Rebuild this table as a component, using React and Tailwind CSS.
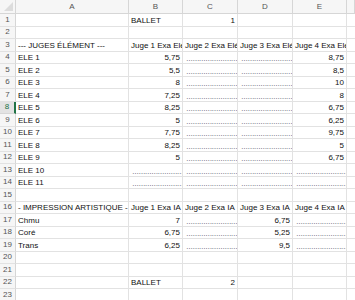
import React from "react";

const D = "……………………";
const rows = [
  ["", "BALLET", "1", "", ""],
  ["", "", "", "", ""],
  ["--- JUGES ÉLÉMENT ---", "Juge 1 Exa Elé", "Juge 2 Exa Elé", "Juge 3 Exa Elé", "Juge 4 Exa Elé"],
  ["ELE 1", "5,75", D, D, "8,75"],
  ["ELE 2", "5,5", D, D, "8,5"],
  ["ELE 3", "8", D, D, "10"],
  ["ELE 4", "7,25", D, D, "8"],
  ["ELE 5", "8,25", D, D, "6,75"],
  ["ELE 6", "5", D, D, "6,25"],
  ["ELE 7", "7,75", D, D, "9,75"],
  ["ELE 8", "8,25", D, D, "5"],
  ["ELE 9", "5", D, D, "6,75"],
  ["ELE 10", D, D, D, D],
  ["ELE 11", D, D, D, D],
  ["", "", "", "", ""],
  ["- IMPRESSION ARTISTIQUE -", "Juge 1 Exa IA", "Juge 2 Exa IA", "Juge 3 Exa IA", "Juge 4 Exa IA"],
  ["Chmu", "7", D, "6,75", D],
  ["Coré", "6,75", D, "5,25", D],
  ["Trans", "6,25", D, "9,5", D],
  ["", "", "", "", ""],
  ["", "", "", "", ""],
  ["", "BALLET", "2", "", ""],
  ["", "", "", "", ""],
];

const isNum = (v) => /^[0-9]+(,[0-9]+)?$/.test(v);

function Cell({ v }) {
  const num = isNum(v);
  const dots = v === D;
  return (
    <div
      className={
        "h-[12.5px] border-r border-b border-[#e2e2e2] overflow-hidden whitespace-nowrap flex items-end px-[2px] leading-[11px] " +
        (num ? "justify-end" : "justify-start")
      }
    >
      {dots ? (
        <span className="text-[7px] tracking-[-0.6px] text-[#1f2840] leading-[9px] pl-[1px]">{v}</span>
      ) : (
        <span>{v}</span>
      )}
    </div>
  );
}

export default function App() {
  return (
    <div
      className="w-[355px] h-[300px] overflow-hidden bg-white text-[8px] text-[#111]"
      style={{ fontFamily: '"Liberation Sans", Arial, sans-serif' }}
    >
      <div className="grid grid-cols-[16px_113px_54px_55px_55px_54px_1fr]">
        <div className="h-[14px] bg-[#f6f6f6] border-r border-b border-[#d6d6d6] relative">
          <svg className="absolute right-[2px] bottom-[2px]" width="9" height="9" viewBox="0 0 9 9">
            <polygon points="9,0 9,9 0,9" fill="#dcdcdc" />
          </svg>
        </div>
        {["A", "B", "C", "D", "E", ""].map((c, i) => (
          <div
            key={i}
            className="h-[14px] bg-[#f6f6f6] border-r border-b border-[#d6d6d6] flex items-center justify-center text-[8px] text-[#555]"
          >
            {c}
          </div>
        ))}
        {rows.map((r, ri) => (
          <React.Fragment key={ri}>
            <div
              className={
                "h-[12.5px] border-b flex items-center justify-center text-[8px] leading-[12px] " +
                (ri === 7
                  ? "bg-[#e3e3e3] text-[#217346] border-r-2 border-r-[#217346] border-b-[#d6d6d6]"
                  : "bg-[#f6f6f6] text-[#555] border-r border-r-[#d6d6d6] border-b-[#e2e2e2]")
              }
            >
              {ri + 1}
            </div>
            {r.map((v, ci) => (
              <Cell key={ci} v={v} />
            ))}
            <div className="h-[12.5px] border-b border-[#e2e2e2]" />
          </React.Fragment>
        ))}
      </div>
    </div>
  );
}
